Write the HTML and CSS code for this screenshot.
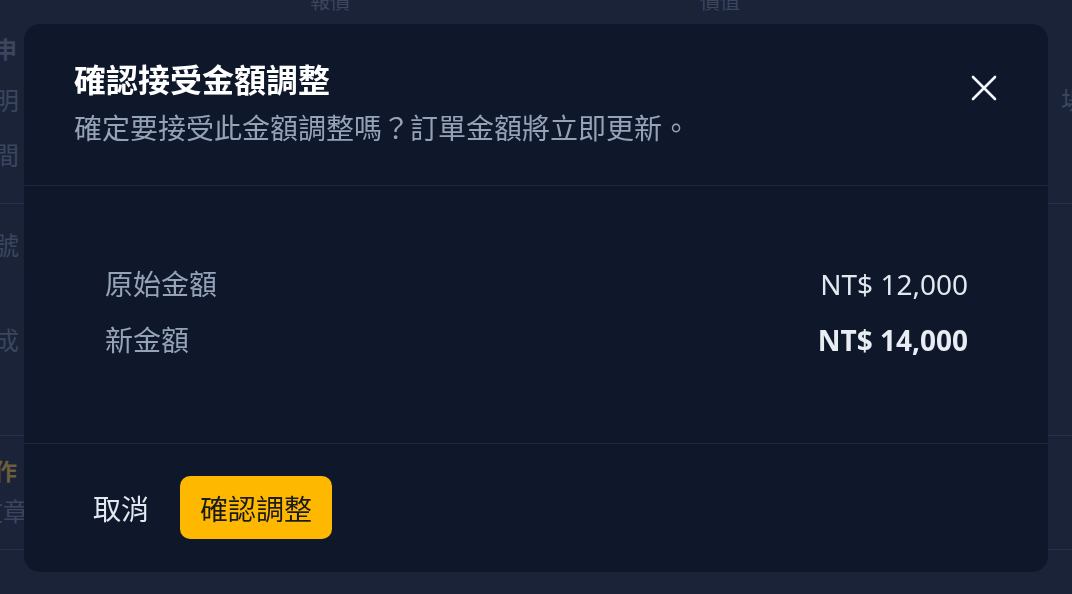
FILE: index.html
```html
<!DOCTYPE html>
<html lang="zh-Hant">
<head>
    <meta charset="UTF-8">
    <meta name="viewport" content="width=device-width, initial-scale=1.0">
    <title>確認接受金額調整</title>
    <link rel="stylesheet" href="styles.css">
</head>
<body>
    <!-- Page behind the dialog (dimmed) -->
    <div class="page">
        <div class="bg-top">
            <span class="bg-col-a">報價</span>
            <span class="bg-col-b">價值</span>
        </div>
        <div class="bg-row r1"><span class="bg-strong">申</span></div>
        <div class="bg-row r2"><span>明</span><span class="bg-right">場</span></div>
        <div class="bg-row r3"><span>間</span></div>
        <div class="bg-row r4 bg-line"></div>
        <div class="bg-row r5"><span>號</span></div>
        <div class="bg-row r6"><span>成</span></div>
        <div class="bg-row r7 bg-line"></div>
        <div class="bg-row r8">
            <span class="bg-accent">作</span>
            <span class="bg-sub">文章</span>
        </div>
        <div class="bg-row r9 bg-line"></div>
    </div>

    <div class="overlay">
        <div class="modal">
            <div class="modal-header">
                <div class="header-text">
                    <h2>確認接受金額調整</h2>
                    <p class="subtitle">確定要接受此金額調整嗎？訂單金額將立即更新。</p>
                </div>
                <button class="close-btn" aria-label="關閉">
                    <svg width="26" height="26" viewBox="0 0 26 26" fill="none" stroke="currentColor" stroke-width="2.6" stroke-linecap="round">
                        <path d="M2 2L24 24M24 2L2 24"/>
                    </svg>
                </button>
            </div>

            <div class="modal-body">
                <div class="amount-row">
                    <span class="amount-label">原始金額</span>
                    <span class="amount-value">NT$ 12,000</span>
                </div>
                <div class="amount-row">
                    <span class="amount-label">新金額</span>
                    <span class="amount-value new">NT$ 14,000</span>
                </div>
            </div>

            <div class="modal-footer">
                <button class="btn btn-cancel">取消</button>
                <button class="btn btn-confirm">確認調整</button>
            </div>
        </div>
    </div>
</body>
</html>
```

FILE: styles.css
```css
/* Base */
body {
    margin: 0;
    background-color: #1a2338;
    font-family: "Noto Sans", "Noto Sans CJK TC", sans-serif;
    overflow: hidden;
    height: 594px;
}

/* Dimmed page behind the dialog */
.page {
    margin-left: -6px;
    color: #3b465e;
    font-size: 25px;
}

.bg-top {
    margin-top: -10px;
    height: 24px;
    line-height: 24px;
    font-size: 20px;
    display: flex;
}

.bg-col-a {
    margin-left: 316px;
}

.bg-col-b {
    margin-left: 350px;
}

.bg-row {
    display: flex;
    justify-content: space-between;
}

.bg-row.r1 { height: 70px; line-height: 70px; }
.bg-row.r2 { height: 32px; line-height: 32px; }
.bg-row.r3 { height: 78px; line-height: 78px; }
.bg-row.r4 { height: 9px; }
.bg-row.r5 { height: 82px; line-height: 82px; }
.bg-row.r6 { height: 108px; line-height: 108px; }
.bg-row.r7 { height: 41px; }
.bg-row.r8 {
    flex-direction: column;
    justify-content: flex-start;
    height: 80px;
    padding-top: 15px;
    line-height: 40px;
}
.bg-row.r9 { height: 18px; }

.bg-line {
    border-bottom: 1px solid #243049;
}

.bg-strong {
    font-weight: 700;
    font-size: 23px;
}

.bg-right {
    margin-right: -14px;
}

.bg-accent {
    color: #6b5e3a;
    font-weight: 700;
    font-size: 23px;
}

.bg-sub {
    margin-left: -16px;
}

/* Dialog */
.overlay {
    position: fixed;
    inset: 0;
    padding: 24px;
}

.modal {
    box-sizing: border-box;
    width: 1024px;
    height: 548px;
    background-color: #0f172a;
    border-radius: 16px;
    display: flex;
    flex-direction: column;
    overflow: hidden;
}

.modal-header {
    display: flex;
    justify-content: space-between;
    align-items: flex-start;
    padding: 36px 50px 37px 50px;
    border-bottom: 1px solid #1e293b;
}

.modal-header h2 {
    margin: 0;
    font-size: 32px;
    line-height: 40px;
    font-weight: 700;
    color: #ffffff;
}

.subtitle {
    margin: 8px 0 0;
    font-size: 28px;
    line-height: 40px;
    color: #94a3b8;
}

.close-btn {
    background: none;
    border: none;
    padding: 0;
    margin-top: 15px;
    margin-right: 1px;
    color: #f1f5f9;
    cursor: pointer;
    display: flex;
}

.modal-body {
    flex: 1;
    padding: 78px 80px 0 81px;
    display: flex;
    flex-direction: column;
    gap: 16px;
}

.amount-row {
    display: flex;
    justify-content: space-between;
    font-size: 28px;
    line-height: 40px;
}

.amount-label {
    color: #94a3b8;
}

.amount-value {
    color: #e2e8f0;
}

.amount-value.new {
    font-weight: 700;
    color: #e8edf4;
}

.modal-footer {
    display: flex;
    gap: 12px;
    padding: 32px 50px 33px;
    border-top: 1px solid #1e293b;
}

.btn {
    font-family: inherit;
    font-size: 28px;
    height: 63px;
    padding: 0 20px;
    border: none;
    border-radius: 10px;
    cursor: pointer;
}

.btn-cancel {
    background: none;
    color: #e2e8f0;
    padding: 0 19px;
}

.btn-confirm {
    background-color: #ffb800;
    color: #1a1a1a;
}
```
